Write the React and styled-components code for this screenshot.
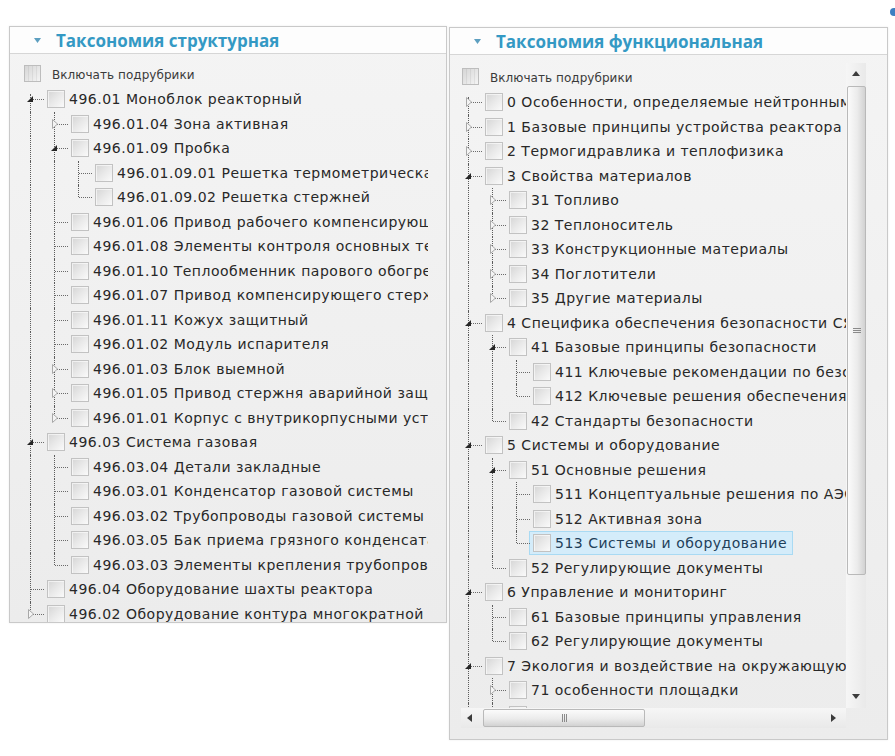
import React from 'react';
import styled, { createGlobalStyle } from 'styled-components';

const GlobalStyle = createGlobalStyle`
  html, body { margin: 0; padding: 0; background: #fff; }
  body { font-family: "DejaVu Sans", Verdana, sans-serif; color: #2b2b2b; }
`;

const structural = [
  { t: '496.01 Моноблок реакторный', open: true, kids: [
    { t: '496.01.04 Зона активная', c: true },
    { t: '496.01.09 Пробка', open: true, kids: [
      { t: '496.01.09.01 Решетка термометрическая' },
      { t: '496.01.09.02 Решетка стержней' },
    ] },
    { t: '496.01.06 Привод рабочего компенсирующего стержня' },
    { t: '496.01.08 Элементы контроля основных технологических параметров' },
    { t: '496.01.10 Теплообменник парового обогрева' },
    { t: '496.01.07 Привод компенсирующего стержня' },
    { t: '496.01.11 Кожух защитный' },
    { t: '496.01.02 Модуль испарителя' },
    { t: '496.01.03 Блок выемной', c: true },
    { t: '496.01.05 Привод стержня аварийной защиты', c: true },
    { t: '496.01.01 Корпус с внутрикорпусными устройствами', c: true },
  ] },
  { t: '496.03 Система газовая', open: true, kids: [
    { t: '496.03.04 Детали закладные' },
    { t: '496.03.01 Конденсатор газовой системы' },
    { t: '496.03.02 Трубопроводы газовой системы' },
    { t: '496.03.05 Бак приема грязного конденсата' },
    { t: '496.03.03 Элементы крепления трубопроводов' },
  ] },
  { t: '496.04 Оборудование шахты реактора' },
  { t: '496.02 Оборудование контура многократной принудительной циркуляции', c: true },
];

const functional = [
  { t: '0 Особенности, определяемые нейтронным спектром', c: true },
  { t: '1 Базовые принципы устройства реактора (РУ)', c: true },
  { t: '2 Термогидравлика и теплофизика', c: true },
  { t: '3 Свойства материалов', open: true, kids: [
    { t: '31 Топливо', c: true },
    { t: '32 Теплоноситель', c: true },
    { t: '33 Конструкционные материалы', c: true },
    { t: '34 Поглотители', c: true },
    { t: '35 Другие материалы', c: true },
  ] },
  { t: '4 Специфика обеспечения безопасности СЯЭУ', open: true, kids: [
    { t: '41 Базовые принципы безопасности', open: true, kids: [
      { t: '411 Ключевые рекомендации по безопасности' },
      { t: '412 Ключевые решения обеспечения безопасности' },
    ] },
    { t: '42 Стандарты безопасности' },
  ] },
  { t: '5 Системы и оборудование', open: true, kids: [
    { t: '51 Основные решения', open: true, kids: [
      { t: '511 Концептуальные решения по АЭС' },
      { t: '512 Активная зона' },
      { t: '513 Системы и оборудование', sel: true },
    ] },
    { t: '52 Регулирующие документы' },
  ] },
  { t: '6 Управление и мониторинг', open: true, kids: [
    { t: '61 Базовые принципы управления' },
    { t: '62 Регулирующие документы' },
  ] },
  { t: '7 Экология и воздействие на окружающую среду', open: true, kids: [
    { t: '71 особенности площадки', c: true },
    { t: '72 Радиационная обстановка', c: true },
  ] },
];

// turns the nested nodes into visible rows with their guide-line info
const flatten = (nodes, openEnd = false, depth = 0, guides = [], out = []) => {
  nodes.forEach((n, i) => {
    const last = i === nodes.length - 1 && !openEnd;
    out.push({ ...n, depth, guides, last, first: depth === 0 && i === 0 });
    if (n.open && n.kids) flatten(n.kids, false, depth + 1, [...guides, !last], out);
  });
  return out;
};

const Page = styled.div`
  position: relative;
  box-sizing: border-box;
  width: 895px;
  height: 756px;
  overflow: hidden;
  display: flex;
  align-items: flex-start;
  gap: 2px;
  padding: 26px 0 0 9px;
`;

const Dot = styled.span`
  position: absolute;
  right: -3px;
  top: 8px;
  width: 8px;
  height: 8px;
  border-radius: 50%;
  background: #3d7fc2;
`;

const Panel = styled.section`
  box-sizing: border-box;
  flex: none;
  width: ${p => p.$w}px;
  height: ${p => p.$h}px;
  margin-top: ${p => p.$top || 0}px;
  border: 1px solid #c9c9c9;
  background: linear-gradient(#f4f4f4, #ececec);
  box-shadow: 0 0 2px rgba(0, 0, 0, 0.08);
  display: flex;
  flex-direction: column;
  overflow: hidden;
`;

const Header = styled.header`
  flex: none;
  height: 26px;
  display: flex;
  align-items: center;
  gap: 15px;
  padding-left: 24px;
  background: #fdfdfd;
  border-bottom: 1px solid #d6d6d6;
`;

const Title = styled.h2`
  margin: 0;
  font-family: "Open Sans", "DejaVu Sans", sans-serif;
  font-weight: 700;
  font-size: 17px;
  line-height: 1;
  color: #3499c4;
`;

const Body = styled.div`
  flex: 1;
  min-height: 0;
  padding: 10px 18px 0 13px;
  display: flex;
  flex-direction: column;
`;

const Clip = styled.div`
  flex: 1;
  min-height: 0;
  overflow: hidden;
`;

const ScrollBody = styled.div`
  flex: 1;
  min-height: 0;
  display: grid;
  grid-template-columns: minmax(0, 1fr) 20px;
  grid-template-rows: minmax(0, 1fr) 20px;
  padding: 8px 21px 11px 11px;
`;

const Viewport = styled.div`
  grid-row: 1;
  grid-column: 1;
  overflow: hidden;
  padding-top: 4px;
`;

const OptionRow = styled.div`
  height: 23px;
  display: flex;
  align-items: flex-start;
  gap: 11px;
  padding-left: 1px;
  font-size: 12px;
  letter-spacing: 0.05px;
  line-height: 23px;
  color: #3a3a3a;
  white-space: nowrap;
`;

const OptionBox = styled.span`
  flex: none;
  width: 15px;
  height: 15px;
  margin-top: 1px;
  border: 1px solid #bdbdbd;
  background:
    repeating-linear-gradient(90deg, transparent 0 3px, rgba(0, 0, 0, 0.06) 3px 4px),
    linear-gradient(135deg, #d6d6d6, #f4f4f4);
`;

const Row = styled.div`
  height: 24.5px;
  display: flex;
  align-items: center;
  white-space: nowrap;
`;

const Guide = styled.span`
  position: relative;
  flex: none;
  width: 24px;
  height: 100%;

  &::before {
    content: '';
    display: ${p => (p.$v === 'none' ? 'none' : 'block')};
    position: absolute;
    left: 7px;
    top: ${p => (p.$first ? '30%' : '0')};
    bottom: ${p => (p.$v === 'top' ? '50%' : '0')};
    border-left: 1px dotted #5c5c5c;
  }

  &::after {
    content: '';
    display: ${p => (p.$h ? 'block' : 'none')};
    position: absolute;
    left: 8px;
    width: 13px;
    top: 50%;
    border-top: 1px dotted #6a6a6a;
  }
`;

const Expander = styled.svg`
  position: absolute;
  z-index: 1;
  left: ${p => p.$x}px;
  top: 50%;
  transform: translateY(-50%);
`;

const Node = styled.span`
  display: flex;
  align-items: center;
  height: 22px;
  margin-left: -4px;
  padding: 0 5px 0 3px;
  border: 1px solid ${p => (p.$sel ? '#a9daf3' : 'transparent')};
  background: ${p => (p.$sel ? '#d4ecfa' : 'transparent')};
`;

const Box = styled.span`
  flex: none;
  width: 16px;
  height: 16px;
  margin-right: 4px;
  border: 1px solid #c2c2c2;
  background: linear-gradient(135deg, #d5d5d5 0%, #e9e9e9 50%, #fafafa 100%);
  box-shadow: inset 1px 1px 0 rgba(255, 255, 255, 0.6);
`;

const Label = styled.span`
  font-size: 14px;
  letter-spacing: 0.5px;
  line-height: 1;
  color: ${p => (p.$sel ? '#1f3f5a' : '#282828')};
`;

const VScroll = styled.div`
  grid-row: 1;
  grid-column: 2;
  display: flex;
  flex-direction: column;
  background: linear-gradient(to right, #f6f6f6, #e9e9e9);
`;

const HScroll = styled.div`
  grid-row: 2;
  grid-column: 1;
  display: flex;
  align-items: stretch;
  background: linear-gradient(#f6f6f6, #e9e9e9);
`;

const Btn = styled.span`
  flex: none;
  display: flex;
  align-items: center;
  justify-content: center;
  width: ${p => p.$w || 20}px;
  height: ${p => p.$h || 20}px;
  margin: ${p => p.$m || '0'};
`;

const VThumb = styled.span`
  flex: none;
  height: 487px;
  margin: 3px 0 0 1px;
  border: 1px solid #b9b9b9;
  border-radius: 2px;
  background: linear-gradient(to right, #fbfbfb, #ebebeb 55%, #d2d2d2);
  display: flex;
  align-items: center;
  justify-content: center;
`;

const HThumb = styled.span`
  flex: none;
  width: 160px;
  margin: 1px 0 1px 6px;
  border: 1px solid #b9b9b9;
  border-radius: 2px;
  background: linear-gradient(#fbfbfb, #ebebeb 55%, #d2d2d2);
  display: flex;
  align-items: center;
  justify-content: center;
`;

const Spacer = styled.span`
  flex: 1;
`;

const Caret = () => (
  <svg width="7" height="5" viewBox="0 0 7 5">
    <polygon points="0,0 7,0 3.5,5" fill="#5d9fc0" />
  </svg>
);

const Arrow = ({ dir }) => {
  const pts = {
    up: '0,5 8,5 4,0',
    down: '0,0 8,0 4,5',
    left: '5,0 5,8 0,4',
    right: '0,0 0,8 5,4',
  }[dir];
  const vertical = dir === 'up' || dir === 'down';
  return (
    <svg width={vertical ? 8 : 5} height={vertical ? 5 : 8}>
      <polygon points={pts} fill="#3c3c3c" />
    </svg>
  );
};

const Grip = ({ vertical }) => (
  <svg width={vertical ? 8 : 7} height={vertical ? 7 : 8}>
    {[1, 3, 5].map(o =>
      vertical
        ? <line key={o} x1="0" x2="8" y1={o + 0.5} y2={o + 0.5} stroke="#8a8a8a" />
        : <line key={o} y1="0" y2="8" x1={o + 0.5} x2={o + 0.5} stroke="#8a8a8a" />
    )}
  </svg>
);

const ExpandIcon = ({ open }) =>
  open ? (
    <Expander $x={3} width="8" height="8" viewBox="0 0 8 8">
      <polygon points="7,1 7,7 1,7" fill="#262626" />
    </Expander>
  ) : (
    <Expander $x={5} width="7" height="10" viewBox="0 0 7 10">
      <polygon points="0.5,0.5 5.5,5 0.5,9.5" fill="#f4f4f4" stroke="#a8a8a8" />
    </Expander>
  );

const Tree = ({ rows }) =>
  rows.map((r, i) => (
    <Row key={i}>
      {r.guides.map((g, k) => <Guide key={k} $v={g ? 'full' : 'none'} />)}
      <Guide $v={r.last ? 'top' : 'full'} $first={r.first} $h>
        {(r.open || r.c) && <ExpandIcon open={r.open} />}
      </Guide>
      <Node $sel={r.sel}>
        <Box />
        <Label $sel={r.sel}>{r.t}</Label>
      </Node>
    </Row>
  ));

const Option = () => (
  <OptionRow>
    <OptionBox />
    <span>Включать подрубрики</span>
  </OptionRow>
);

export default function App() {
  const left = flatten(structural);
  const right = flatten(functional, true);

  return (
    <>
      <GlobalStyle />
      <Page>
        <Panel $w={438} $h={597}>
          <Header>
            <Caret />
            <Title>Таксономия структурная</Title>
          </Header>
          <Body>
            <Clip>
              <Option />
              <Tree rows={left} />
            </Clip>
          </Body>
        </Panel>

        <Panel $w={439} $h={713} $top={1}>
          <Header>
            <Caret />
            <Title>Таксономия функциональная</Title>
          </Header>
          <ScrollBody>
            <Viewport>
              <Option />
              <Tree rows={right} />
            </Viewport>
            <VScroll>
              <Btn><Arrow dir="up" /></Btn>
              <VThumb><Grip vertical /></VThumb>
              <Spacer />
              <Btn $m="0 0 2px 0"><Arrow dir="down" /></Btn>
            </VScroll>
            <HScroll>
              <Btn $w={16}><Arrow dir="left" /></Btn>
              <HThumb><Grip /></HThumb>
              <Spacer />
              <Btn $w={16} $m="0 5px 0 0"><Arrow dir="right" /></Btn>
            </HScroll>
          </ScrollBody>
        </Panel>
        <Dot />
      </Page>
    </>
  );
}
